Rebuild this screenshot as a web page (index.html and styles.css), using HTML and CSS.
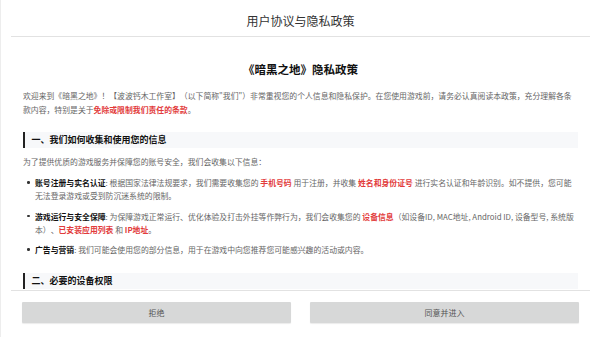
FILE: index.html
```html
<!DOCTYPE html>
<html lang="zh">
<head>
<meta charset="utf-8">
<title>用户协议与隐私政策</title>
<link rel="stylesheet" href="styles.css">
</head>
<body>
<div class="app">
  <header class="header">用户协议与隐私政策</header>
  <div class="rule"></div>
  <main class="scroll">
    <h1 class="doc-title">《暗黑之地》隐私政策</h1>
    <p class="para">欢迎来到《暗黑之地》！【波波钙木工作室】（以下简称"我们"）非常重视您的个人信息和隐私保护。在您使用游戏前，请务必认真阅读本政策，充分理解各条款内容，特别是关于<strong class="red">免除或限制我们责任的条款</strong>。</p>
    <h2 class="section">一、我们如何收集和使用您的信息</h2>
    <p class="para">为了提供优质的游戏服务并保障您的账号安全，我们会收集以下信息：</p>
    <ul class="list">
      <li><b class="label">账号注册与实名认证</b>: 根据国家法律法规要求，我们需要收集您的 <span class="red">手机号码</span> 用于注册，并收集 <span class="red">姓名和身份证号</span> 进行实名认证和年龄识别。如不提供，您可能无法登录游戏或受到防沉迷系统的限制。</li>
      <li><b class="label">游戏运行与安全保障</b>: 为保障游戏正常运行、优化体验及打击外挂等作弊行为，我们会收集您的 <span class="red">设备信息</span>（如设备ID, MAC地址, Android ID, 设备型号, 系统版本）、<span class="red">已安装应用列表</span> 和 <span class="red">IP地址</span>。</li>
      <li><b class="label">广告与营销</b>: 我们可能会使用您的部分信息，用于在游戏中向您推荐您可能感兴趣的活动或内容。</li>
    </ul>
    <h2 class="section">二、必要的设备权限</h2>
  </main>
  <div class="rule"></div>
  <footer class="footer">
    <button class="btn">拒绝</button>
    <button class="btn">同意并进入</button>
  </footer>
</div>
</body>
</html>
```

FILE: styles.css
```css
html, body {
  margin: 0;
  padding: 0;
  background: #ffffff;
}
body {
  font-family: "Noto Sans CJK SC", "Noto Sans", sans-serif;
  color: #666666;
  text-spacing-trim: space-all;
}
.app {
  width: 600px;
  height: 337px;
  box-sizing: border-box;
  border-left: 1px solid #ededed;
  display: flex;
  flex-direction: column;
  overflow: hidden;
}
.header {
  height: 36px;
  box-sizing: border-box;
  padding-top: 5px;
  display: flex;
  align-items: center;
  justify-content: center;
  font-size: 12px;
  color: #333333;
  flex: none;
}
.rule {
  flex: none;
  height: 1px;
  margin: 0 10px;
  background: #e2e2e2;
}
.scroll {
  flex: 1;
  overflow: hidden;
  padding: 0 22px 0 22px;
}
.doc-title {
  margin: 24px 0 0;
  font-size: 11.5px;
  line-height: 16px;
  font-weight: 700;
  color: #111111;
  text-align: center;
}
.para {
  margin: 12px 0 0;
  font-size: 7.85px;
  line-height: 14px;
  color: #666666;
}
.red {
  color: #e23b3b;
  font-weight: 600;
}
.section {
  margin: 15px 0 0;
  height: 16px;
  background: #f7f8fa;
  border-left: 2.5px solid #222222;
  padding-left: 6.5px;
  font-size: 9px;
  line-height: 16px;
  font-weight: 700;
  color: #111111;
}
.section + .para {
  margin-top: 7px;
}
.list {
  list-style: none;
  margin: 7px 0 0;
  padding: 0 0 0 12px;
  font-size: 7.85px;
  line-height: 13px;
  color: #666666;
}
.list li {
  position: relative;
  margin-bottom: 7.5px;
}
.list li::before {
  content: "";
  position: absolute;
  left: -8px;
  top: 5.25px;
  width: 2.5px;
  height: 2.5px;
  border-radius: 50%;
  background: #333333;
}
.label {
  color: #111111;
  font-weight: 700;
}
.list + .section {
  margin-top: 17px;
}
.footer {
  flex: none;
  height: 46px;
  box-sizing: border-box;
  padding: 11px 21px 14px;
  display: flex;
  gap: 19px;
}
.btn {
  flex: 1;
  height: 21px;
  border: none;
  border-radius: 1px;
  background: #d7d8d8;
  box-shadow: 0 1px 1px rgba(0, 0, 0, 0.08);
  font-family: "Noto Sans CJK SC", "Noto Sans", sans-serif;
  font-size: 8px;
  color: #555555;
  padding: 0;
}
```
